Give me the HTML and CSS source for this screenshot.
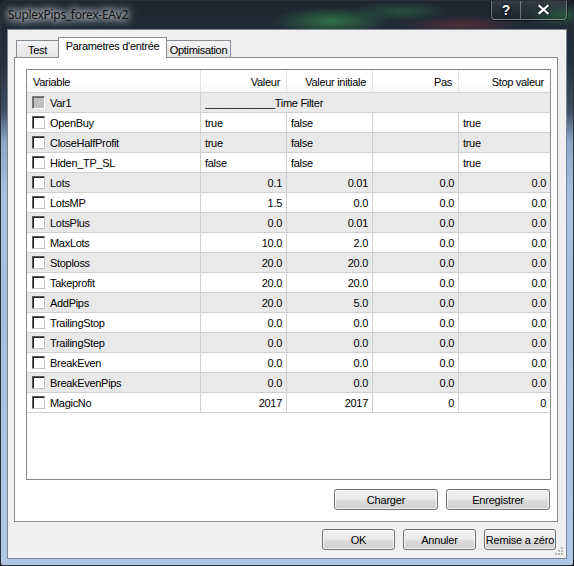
FILE: index.html
```html
<!DOCTYPE html>
<html>
<head>
<meta charset="utf-8">
<link rel="stylesheet" href="styles.css">
</head>
<body>
<div class="window">
  <div class="titlebar">
    <div class="title">SuplexPips_forex-EAv2</div>
    <div class="controls">
      <div class="ctl help">?</div>
      <div class="ctl close"><svg width="13" height="11" viewBox="0 0 13 11"><path d="M2 1.5 L11 9.5 M11 1.5 L2 9.5" stroke="#1a2230" stroke-width="3.8" stroke-linecap="square"/><path d="M2.3 1.8 L10.7 9.2 M10.7 1.8 L2.3 9.2" stroke="#fff" stroke-width="2.1" stroke-linecap="square"/></svg></div>
    </div>
  </div>
  <div class="client">
    <div class="tabs">
      <div class="tab">Test</div>
      <div class="tab active">Parametres d'entrée</div>
      <div class="tab">Optimisation</div>
    </div>
    <div class="panel">
      <div class="grid">
        <div class="row head">
          <div class="c l">Variable</div>
          <div class="c r">Valeur</div>
          <div class="c r">Valeur initiale</div>
          <div class="c r">Pas</div>
          <div class="c r last">Stop valeur</div>
        </div>
        <div class="row alt group">
          <div class="c v"><span class="cb filled"></span>Var1</div>
          <div class="c l last span">____________Time Filter</div>
        </div>
        <div class="row">
          <div class="c v"><span class="cb"></span>OpenBuy</div>
          <div class="c l">true</div><div class="c l">false</div><div class="c l"></div><div class="c l last">true</div>
        </div>
        <div class="row alt">
          <div class="c v"><span class="cb"></span>CloseHalfProfit</div>
          <div class="c l">true</div><div class="c l">false</div><div class="c l"></div><div class="c l last">true</div>
        </div>
        <div class="row">
          <div class="c v"><span class="cb"></span>Hiden_TP_SL</div>
          <div class="c l">false</div><div class="c l">false</div><div class="c l"></div><div class="c l last">true</div>
        </div>
        <div class="row alt">
          <div class="c v"><span class="cb"></span>Lots</div>
          <div class="c r">0.1</div><div class="c r">0.01</div><div class="c r">0.0</div><div class="c r last">0.0</div>
        </div>
        <div class="row">
          <div class="c v"><span class="cb"></span>LotsMP</div>
          <div class="c r">1.5</div><div class="c r">0.0</div><div class="c r">0.0</div><div class="c r last">0.0</div>
        </div>
        <div class="row alt">
          <div class="c v"><span class="cb"></span>LotsPlus</div>
          <div class="c r">0.0</div><div class="c r">0.01</div><div class="c r">0.0</div><div class="c r last">0.0</div>
        </div>
        <div class="row">
          <div class="c v"><span class="cb"></span>MaxLots</div>
          <div class="c r">10.0</div><div class="c r">2.0</div><div class="c r">0.0</div><div class="c r last">0.0</div>
        </div>
        <div class="row alt">
          <div class="c v"><span class="cb"></span>Stoploss</div>
          <div class="c r">20.0</div><div class="c r">20.0</div><div class="c r">0.0</div><div class="c r last">0.0</div>
        </div>
        <div class="row">
          <div class="c v"><span class="cb"></span>Takeprofit</div>
          <div class="c r">20.0</div><div class="c r">20.0</div><div class="c r">0.0</div><div class="c r last">0.0</div>
        </div>
        <div class="row alt">
          <div class="c v"><span class="cb"></span>AddPips</div>
          <div class="c r">20.0</div><div class="c r">5.0</div><div class="c r">0.0</div><div class="c r last">0.0</div>
        </div>
        <div class="row">
          <div class="c v"><span class="cb"></span>TrailingStop</div>
          <div class="c r">0.0</div><div class="c r">0.0</div><div class="c r">0.0</div><div class="c r last">0.0</div>
        </div>
        <div class="row alt">
          <div class="c v"><span class="cb"></span>TrailingStep</div>
          <div class="c r">0.0</div><div class="c r">0.0</div><div class="c r">0.0</div><div class="c r last">0.0</div>
        </div>
        <div class="row">
          <div class="c v"><span class="cb"></span>BreakEven</div>
          <div class="c r">0.0</div><div class="c r">0.0</div><div class="c r">0.0</div><div class="c r last">0.0</div>
        </div>
        <div class="row alt">
          <div class="c v"><span class="cb"></span>BreakEvenPips</div>
          <div class="c r">0.0</div><div class="c r">0.0</div><div class="c r">0.0</div><div class="c r last">0.0</div>
        </div>
        <div class="row">
          <div class="c v"><span class="cb"></span>MagicNo</div>
          <div class="c r">2017</div><div class="c r">2017</div><div class="c r">0</div><div class="c r last">0</div>
        </div>
      </div>
      <div class="panel-buttons">
        <div class="btn wide">Charger</div>
        <div class="btn wide">Enregistrer</div>
      </div>
    </div>
    <div class="dialog-buttons">
      <div class="btn">OK</div>
      <div class="btn">Annuler</div>
      <div class="btn narrow">Remise a zéro</div>
    </div>
    <svg class="grip" width="10" height="10" viewBox="0 0 10 10">
      <g fill="#b8b8b8">
        <rect x="7" y="1" width="2" height="2"/>
        <rect x="4" y="4" width="2" height="2"/><rect x="7" y="4" width="2" height="2"/>
        <rect x="1" y="7" width="2" height="2"/><rect x="4" y="7" width="2" height="2"/><rect x="7" y="7" width="2" height="2"/>
      </g>
    </svg>
  </div>
</div>
</body>
</html>
```

FILE: styles.css
```css
* { box-sizing: border-box; }
html, body { margin: 0; padding: 0; }
body {
  background: #141a22;
  width: 574px;
  height: 566px;
  overflow: hidden;
  font-family: "Liberation Sans", Arial, sans-serif;
  font-size: 11px;
  color: #000;
}
.window {
  width: 574px;
  height: 566px;
  border: 1px solid #2a3038;
  border-radius: 7px 7px 3px 3px;
  background:
    radial-gradient(ellipse 60px 14px at 330px 20px, rgba(60,170,80,0.55), rgba(60,170,80,0) 100%),
    radial-gradient(ellipse 50px 10px at 400px 10px, rgba(60,160,80,0.35), rgba(60,160,80,0) 100%),
    radial-gradient(ellipse 60px 10px at 460px 24px, rgba(170,60,60,0.35), rgba(170,60,60,0) 100%),
    radial-gradient(ellipse 40px 12px at 560px 14px, rgba(60,170,80,0.35), rgba(60,170,80,0) 100%),
    linear-gradient(to bottom, #1d2530 0px, #24303e 60px, #3e4f63 110px, #8aa6c8 140px, #a9c2e2 200px, #a4bedf 300px, #b0c8e6 566px);
  overflow: hidden;
  display: flex;
  flex-direction: column;
}
.titlebar {
  height: 28px;
  display: flex;
  align-items: flex-start;
  flex: none;
}
.title {
  font-family: "Noto Sans", "Open Sans", sans-serif;
  font-size: 12px;
  color: #101010;
  padding: 5px 0 0 7px;
  letter-spacing: -0.3px;
  text-shadow: 0 0 6px #fff, 0 0 10px rgba(255,255,255,0.9), 0 0 14px rgba(255,255,255,0.8);
}
.controls {
  margin-left: auto;
  margin-right: 5px;
  margin-top: -1px;
  display: flex;
  height: 21px;
  border: 1px solid rgba(0,0,0,0.55);
  border-top: none;
  border-radius: 0 0 5px 5px;
}
.ctl {
  height: 20px;
  display: flex;
  align-items: center;
  justify-content: center;
  border: 1px solid rgba(255,255,255,0.35);
  border-top: none;
  background: linear-gradient(to bottom, rgba(255,255,255,0.12), rgba(255,255,255,0.04) 50%, rgba(0,0,0,0.1));
  color: #fff;
}
.help {
  width: 29px;
  border-radius: 0 0 0 4px;
  border-right: none;
  font-weight: bold;
  font-size: 14px;
  text-shadow: 0 0 2px #000, 0 0 3px #000;
}
.close {
  width: 47px;
  border-radius: 0 0 4px 0;
  border-left: 1px solid rgba(255,255,255,0.35);
}
.client {
  position: relative;
  margin-left: 6px;
  width: 560px;
  height: 530px;
  border: 1px solid #7d8591;
  background: #f0f0f0;
  padding: 7px 0 0 0;
  flex: none;
}
.tabs {
  display: flex;
  align-items: flex-end;
  height: 20px;
  margin-left: 8px;
}
.tab {
  height: 17px;
  border: 1px solid #898c95;
  border-bottom: none;
  background: linear-gradient(to bottom, #f4f4f4, #e4e4e4);
  display: flex;
  align-items: center;
  justify-content: center;
  padding-top: 1px;
  letter-spacing: -0.3px;
}
.tab:nth-child(1) { width: 42px; border-right: none; }
.tab:nth-child(3) { width: 64px; border-left: none; }
.tab.active {
  position: relative;
  z-index: 2;
  width: 109px;
  height: 21px;
  margin-bottom: -1px;
  background: #fff;
  align-items: flex-start;
  padding-top: 2px;
}
.panel {
  margin: 0 8px 0 6px;
  height: 465px;
  border: 1px solid #898c95;
  background: #fff;
  padding: 11px 6px 0 11px;
}
.grid {
  height: 411px;
  border: 1px solid #828790;
  background: #fff;
}
.row {
  display: grid;
  grid-template-columns: 174px 86px 86px 86px 1fr;
  height: 20px;
  border-bottom: 1px solid #d0d0d0;
}
.row.alt { background: #e9e9e9; }
.row.head {
  height: 23px;
  border-bottom: 1px solid #d5d5d5;
  background: linear-gradient(to bottom, #ffffff 0%, #ffffff 55%, #f5f6f7 100%);
}
.row.group { grid-template-columns: 174px 1fr; }
.c {
  border-right: 1px solid #cfcfcf;
  display: flex;
  align-items: center;
  white-space: nowrap;
  letter-spacing: -0.3px;
  overflow: hidden;
}
.c.last { border-right: none; }
.head .c { border-right-color: #e4e4e6; padding-top: 1px; }
.head .c.last { border-right: none; }
.c.l { padding-left: 4px; }
.c.r { justify-content: flex-end; padding-right: 4px; }
.head .c.l { padding-left: 6px; }
.head .c.r { padding-right: 6px; }
.c.v { padding-left: 5px; }
.cb {
  width: 13px;
  height: 13px;
  margin-right: 5px;
  background: #fff;
  border-top: 1px solid #5a5a5a;
  border-left: 1px solid #5a5a5a;
  border-right: 1px solid #c4c4c4;
  border-bottom: 1px solid #c4c4c4;
  box-shadow: inset 1px 1px 0 #1e1e1e;
  flex: none;
}
.cb.filled {
  background: #c0c0c0;
  box-shadow: inset 1px 1px 0 #6a6a6a;
  border-top-color: #7a7a7a;
  border-left-color: #7a7a7a;
  border-right-color: #fff;
  border-bottom-color: #fff;
}
.panel-buttons {
  display: flex;
  justify-content: flex-end;
  gap: 8px;
  margin-top: 9px;
  margin-right: 1px;
}
.btn {
  width: 73px;
  height: 21px;
  border: 1px solid #707070;
  border-radius: 3px;
  background: linear-gradient(to bottom, #f2f2f2 0%, #ebebeb 48%, #dddddd 52%, #cfcfcf 100%);
  box-shadow: inset 0 0 0 1px rgba(255,255,255,0.75);
  display: flex;
  align-items: center;
  justify-content: center;
  letter-spacing: -0.2px;
  white-space: nowrap;
}
.btn.wide { width: 104px; }
.btn.narrow { width: 72px; }
.dialog-buttons {
  display: flex;
  justify-content: flex-end;
  gap: 8px;
  margin-top: 7px;
  margin-right: 10px;
}
.grip {
  position: absolute;
  right: 2px;
  bottom: 2px;
}
```
